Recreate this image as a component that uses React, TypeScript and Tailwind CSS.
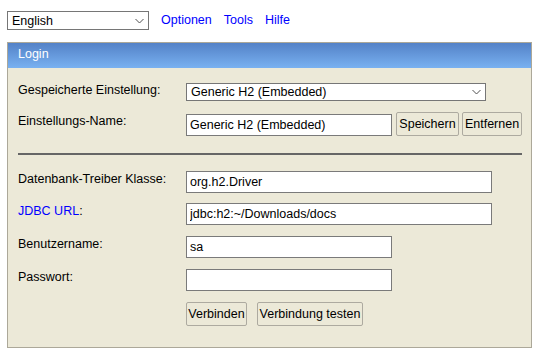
import React from 'react';

function Chevron() {
  return (
    <svg
      width="9"
      height="5"
      viewBox="0 0 9 5"
      className="pointer-events-none absolute right-[5px] top-1/2 -translate-y-1/2"
    >
      <path d="M0.5 0.5L4.5 4.5L8.5 0.5" fill="none" stroke="#505050" strokeWidth="1" />
    </svg>
  );
}

function TextField({ value, width }: { value: string; width: string }) {
  return (
    <input
      type="text"
      defaultValue={value}
      className={`${width} h-[22px] border border-[#7a7a7a] bg-white px-[3px] text-black outline-none`}
    />
  );
}

function Button({ label, width }: { label: string; width: string }) {
  return (
    <button
      type="button"
      className={`${width} h-[24px] rounded-[2px] border border-[#adaaa0] bg-[#ece9d8] text-center text-black`}
    >
      {label}
    </button>
  );
}

export default function App() {
  return (
    <div className="bg-white pl-[7px] pt-[11px] font-['Liberation_Sans',Arial,sans-serif] text-[12.5px] text-black">
      {/* language + nav links */}
      <div className="flex h-[19px] items-center">
        <div className="relative h-[19px] w-[142px]">
          <select className="h-full w-full appearance-none border border-[#767676] bg-white pl-[4px] text-black outline-none">
            <option>English</option>
          </select>
          <Chevron />
        </div>
        <a href="#" className="ml-[12px] text-[#0000ff]">Optionen</a>
        <a href="#" className="ml-[12px] text-[#0000ff]">Tools</a>
        <a href="#" className="ml-[12px] text-[#0000ff]">Hilfe</a>
      </div>

      {/* login panel */}
      <div className="mt-[12px] w-[525px] border border-[#aca899] bg-[#ece9d8]">
        <div className="flex h-[25px] items-center bg-gradient-to-b from-[#5482c7] to-[#79b1f1] pb-[2px] pl-[10px] text-white">
          Login
        </div>

        <div className="flex flex-col pb-[21px] pl-[10px] pr-[9px] pt-[15px]">
          <div className="flex items-start">
            <div className="w-[168px] shrink-0 leading-[14px]">Gespeicherte Einstellung:</div>
            <div className="relative h-[18px] w-[300px]">
              <select className="h-full w-full appearance-none border border-[#767676] bg-white pl-[4px] leading-[16px] text-black outline-none">
                <option>Generic H2 (Embedded)</option>
              </select>
              <Chevron />
            </div>
          </div>

          <div className="mt-[11px] flex items-start">
            <div className="w-[168px] shrink-0 pt-[2px] leading-[14px]">Einstellungs-Name:</div>
            <div className="flex items-end">
              <TextField value="Generic H2 (Embedded)" width="w-[206px]" />
              <div className="ml-[4px]">
                <Button label="Speichern" width="w-[63px]" />
              </div>
              <div className="ml-[3px]">
                <Button label="Entfernen" width="w-[60px]" />
              </div>
            </div>
          </div>

          <div className="mt-[17px] h-[2px] bg-[#666666]" />

          <div className="mt-[16px] flex items-start">
            <div className="w-[168px] shrink-0 pt-[1px] leading-[14px]">Datenbank-Treiber Klasse:</div>
            <TextField value="org.h2.Driver" width="w-[306px]" />
          </div>

          <div className="mt-[10px] flex items-start">
            <div className="w-[168px] shrink-0 pt-[1px] leading-[14px]">
              <a href="#" className="text-[#0000ff]">JDBC URL</a>:
            </div>
            <TextField value="jdbc:h2:~/Downloads/docs" width="w-[306px]" />
          </div>

          <div className="mt-[11px] flex items-start">
            <div className="w-[168px] shrink-0 pt-[1px] leading-[14px]">Benutzername:</div>
            <TextField value="sa" width="w-[206px]" />
          </div>

          <div className="mt-[11px] flex items-start">
            <div className="w-[168px] shrink-0 pt-[1px] leading-[14px]">Passwort:</div>
            <input
              type="password"
              className="h-[22px] w-[206px] border border-[#7a7a7a] bg-white px-[3px] outline-none"
            />
          </div>

          <div className="mt-[11px] flex pl-[168px]">
            <Button label="Verbinden" width="w-[61px]" />
            <div className="ml-[10px]">
              <Button label="Verbindung testen" width="w-[106px]" />
            </div>
          </div>
        </div>
      </div>
    </div>
  );
}
